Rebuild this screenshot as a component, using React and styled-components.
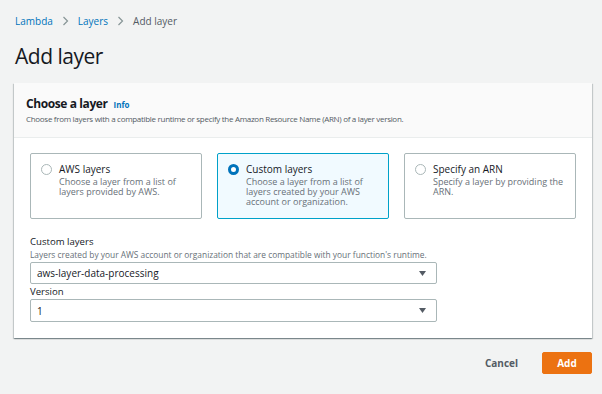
import React, { useState } from 'react'
import styled, { createGlobalStyle } from 'styled-components'

const GlobalStyle = createGlobalStyle`
  body {
    margin: 0;
    background: #f2f3f3;
    font-family: "Open Sans", "Noto Sans", sans-serif;
    color: #16191f;
  }
`

const Page = styled.div`
  width: 602px;
  height: 394px;
  padding: 14px 10px 0 14px;
  box-sizing: border-box;
`

const Crumbs = styled.nav`
  display: flex;
  align-items: center;
  gap: 9px;
  height: 14px;
  font-size: 10px;
  padding-left: 1px;
`

const Crumb = styled.span`
  color: ${props => props.current ? '#545b64' : '#0073bb'};
`

const Chevron = styled.svg`
  width: 7px;
  height: 10px;
`

const Title = styled.h1`
  margin: 13px 0 0 1px;
  font-size: 21px;
  font-weight: 400;
  line-height: 30px;
  letter-spacing: -0.5px;
`

const Card = styled.section`
  margin-top: 12px;
  background: #fff;
  box-shadow: 0 1px 1px 0 rgba(0, 28, 36, 0.3), 1px 1px 1px 0 rgba(0, 28, 36, 0.15), -1px 1px 1px 0 rgba(0, 28, 36, 0.15);
`

const CardHeader = styled.header`
  background: #fafafa;
  border-bottom: 1px solid #eaeded;
  padding: 12px 12px 0;
  height: 55px;
  box-sizing: border-box;
`

const HeaderTitle = styled.h2`
  margin: 0;
  display: flex;
  align-items: baseline;
  gap: 6px;
  font-size: 12px;
  font-weight: 700;
  line-height: 18px;
  letter-spacing: -0.4px;
`

const InfoLink = styled.span`
  color: #0073bb;
  font-size: 8px;
  font-weight: 700;
  letter-spacing: 0;
`

const HeaderDesc = styled.p`
  margin: 0;
  font-size: 8px;
  line-height: 10px;
  letter-spacing: -0.3px;
  color: #545b64;
`

const CardBody = styled.div`
  padding: 15px 15px 16px 16px;
`

const Tiles = styled.div`
  display: grid;
  grid-template-columns: repeat(3, 172px);
  gap: 15px;
`

const Tile = styled.label`
  display: flex;
  gap: 7px;
  height: 66px;
  box-sizing: border-box;
  padding: 9px 10px 0 10px;
  border: 1px solid ${props => props.selected ? '#00a1c9' : '#aab7b8'};
  background: ${props => props.selected ? '#f1faff' : '#fff'};
  border-radius: 2px;
  cursor: pointer;
`

const Radio = styled.span`
  flex: none;
  width: 11px;
  height: 11px;
  margin-top: 1px;
  border-radius: 50%;
  box-sizing: border-box;
  border: ${props => props.checked ? '3px solid #0073bb' : '1px solid #aab7b8'};
  background: #fff;
`

const TileText = styled.div`
  display: flex;
  flex-direction: column;
`

const TileTitle = styled.span`
  font-size: 10px;
  line-height: 12px;
`

const TileDesc = styled.span`
  margin-top: 2px;
  font-size: 9px;
  line-height: 10px;
  color: #687078;
`

const Field = styled.div`
  margin-top: ${props => props.first ? '16px' : '1px'};
  width: 407px;
`

const FieldLabel = styled.div`
  font-size: 9.6px;
  line-height: 14px;
`

const FieldDesc = styled.div`
  font-size: 8.4px;
  line-height: 12px;
  color: #687078;
`

const Select = styled.div`
  margin-top: ${props => props.spaced ? '0' : '1px'};
  height: ${props => props.spaced ? '23px' : '22px'};
  box-sizing: border-box;
  border: 1px solid #aab7b8;
  border-radius: 2px;
  display: flex;
  align-items: center;
  justify-content: space-between;
  padding: 0 10px 0 6px;
  font-size: 10px;
`

const Caret = styled.svg`
  width: 7px;
  height: 5px;
`

const Actions = styled.div`
  display: flex;
  justify-content: flex-end;
  align-items: center;
  gap: 24px;
  margin-top: 14px;
`

const Button = styled.button`
  font-family: inherit;
  font-size: 10px;
  font-weight: 700;
  height: 22px;
  padding: 0;
  width: ${props => props.primary ? '50px' : 'auto'};
  border: ${props => props.primary ? '1px solid #ec7211' : 'none'};
  border-radius: 2px;
  background: ${props => props.primary ? '#ec7211' : 'transparent'};
  color: ${props => props.primary ? '#fff' : '#545b64'};
  cursor: pointer;
`

const tiles = [
  { id: 'aws', title: 'AWS layers', desc: 'Choose a layer from a list of layers provided by AWS.' },
  { id: 'custom', title: 'Custom layers', desc: 'Choose a layer from a list of layers created by your AWS account or organization.' },
  { id: 'arn', title: 'Specify an ARN', desc: 'Specify a layer by providing the ARN.' }
]

const ChevronIcon = () => (
  <Chevron viewBox="0 0 7 10">
    <path d="M1.5 1 L5.5 5 L1.5 9" fill="none" stroke="#879596" strokeWidth="1.2" />
  </Chevron>
)

const CaretIcon = () => (
  <Caret viewBox="0 0 7 5">
    <path d="M0 0 H7 L3.5 5 Z" fill="#545b64" />
  </Caret>
)

export default function App () {
  const [choice, setChoice] = useState('custom')

  return (
    <Page>
      <GlobalStyle />
      <Crumbs>
        <Crumb>Lambda</Crumb>
        <ChevronIcon />
        <Crumb>Layers</Crumb>
        <ChevronIcon />
        <Crumb current>Add layer</Crumb>
      </Crumbs>
      <Title>Add layer</Title>
      <Card>
        <CardHeader>
          <HeaderTitle>Choose a layer <InfoLink>Info</InfoLink></HeaderTitle>
          <HeaderDesc>
            Choose from layers with a compatible runtime or specify the Amazon Resource Name (ARN) of a layer version.
          </HeaderDesc>
        </CardHeader>
        <CardBody>
          <Tiles>
            { tiles.map(t => (
              <Tile key={ t.id } selected={ choice === t.id } onClick={ () => setChoice(t.id) }>
                <Radio checked={ choice === t.id } />
                <TileText>
                  <TileTitle>{ t.title }</TileTitle>
                  <TileDesc>{ t.desc }</TileDesc>
                </TileText>
              </Tile>
            )) }
          </Tiles>
          <Field first>
            <FieldLabel>Custom layers</FieldLabel>
            <FieldDesc>Layers created by your AWS account or organization that are compatible with your function's runtime.</FieldDesc>
            <Select>aws-layer-data-processing<CaretIcon /></Select>
          </Field>
          <Field>
            <FieldLabel>Version</FieldLabel>
            <Select spaced>1<CaretIcon /></Select>
          </Field>
        </CardBody>
      </Card>
      <Actions>
        <Button>Cancel</Button>
        <Button primary>Add</Button>
      </Actions>
    </Page>
  )
}
